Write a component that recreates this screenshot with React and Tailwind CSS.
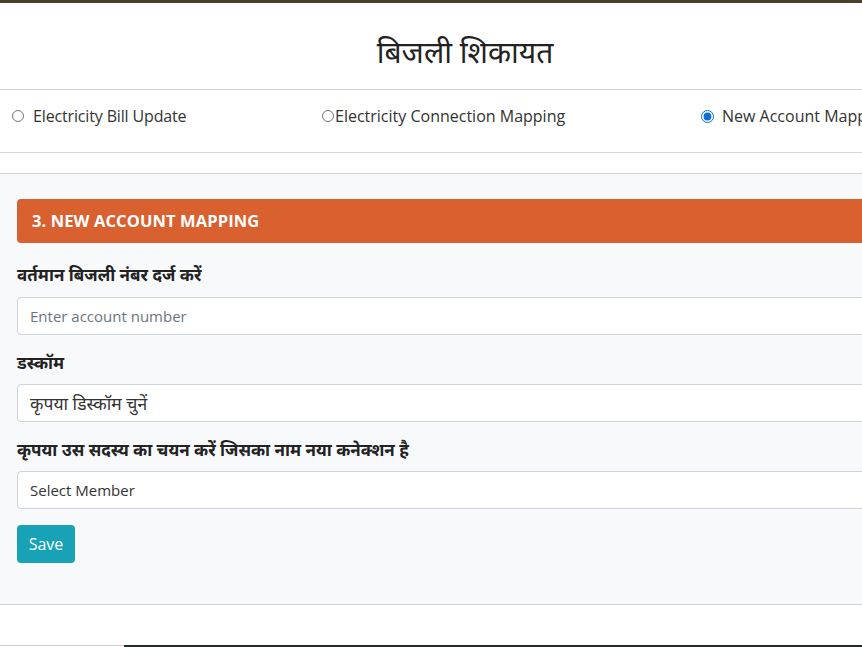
import React from "react";

const font = { fontFamily: '"Open Sans", "Noto Sans", sans-serif' };

export default function App() {
  return (
    <div className="w-full h-[647px] overflow-hidden bg-white" style={font}>
      <div className="w-[930px]">
        <div className="h-[3px] bg-[#4a3f2b]" />
        <div className="h-[87px] flex items-center justify-center border-b border-[#d4d4d4]">
          <h1 className="text-[30px] leading-none text-[#222] pt-[12px]">बिजली शिकायत</h1>
        </div>
        <div className="h-[63px] border-b border-[#d4d4d4] flex items-start pt-[15px] text-[16px] leading-[22px] text-[#333]">
          <label className="flex items-center ml-[12px] w-[310px]">
            <input type="radio" readOnly className="w-[12px] h-[12px] m-0 mr-[9px]" />
            <span className="tracking-[-0.15px]">Electricity Bill Update</span>
          </label>
          <label className="flex items-center w-[379px]">
            <input type="radio" readOnly className="w-[12px] h-[12px] m-0 mr-[1px]" />
            <span>Electricity Connection Mapping</span>
          </label>
          <label className="flex items-center">
            <input type="radio" readOnly checked className="w-[13px] h-[13px] m-0 mr-[8px] accent-[#0a6fd8]" />
            <span>New Account Mapping</span>
          </label>
        </div>
        <div className="h-[21px] border-b border-[#d4d4d4]" />
        <div className="bg-[#f8f9fa] border-b border-[#cfcfcf] pt-[25px] pb-[41px] px-[17px]">
          <div className="h-[44px] rounded-[4px] bg-[#d9612f] flex items-center px-[15px]">
            <span className="text-white font-bold text-[16.5px] tracking-[0.1px]">3. NEW ACCOUNT MAPPING</span>
          </div>
          <div className="mt-[20px] text-[17px] font-bold text-[#222] leading-[24px]">वर्तमान बिजली नंबर दर्ज करें</div>
          <div className="mt-[10px] h-[38px] bg-white border border-[#ced4da] rounded-[4px] flex items-center px-[12px] text-[15px] text-[#6c757d]">
            Enter account number
          </div>
          <div className="mt-[16px] text-[17px] font-bold text-[#222] leading-[24px]">डस्कॉम</div>
          <div className="mt-[9px] h-[38px] bg-white border border-[#ced4da] rounded-[4px] flex items-center px-[12px] text-[17.5px] text-[#333]">
            कृपया डिस्कॉम चुनें
          </div>
          <div className="mt-[16px] text-[17px] font-bold text-[#222] leading-[24px]">कृपया उस सदस्य का चयन करें जिसका नाम नया कनेक्शन है</div>
          <div className="mt-[9px] h-[38px] bg-white border border-[#ced4da] rounded-[4px] flex items-center px-[12px] text-[15px] text-[#333]">
            Select Member
          </div>
          <button className="mt-[16px] w-[58px] h-[38px] rounded-[4px] bg-[#17a2b8] text-white text-[16px]">Save</button>
        </div>
        <div className="h-[40px]" />
        <div className="flex h-[3px]">
          <div className="w-[124px] border-t border-[#cfcfcf]" />
          <div className="flex-1 bg-[#1f2b2d]" />
        </div>
      </div>
    </div>
  );
}
